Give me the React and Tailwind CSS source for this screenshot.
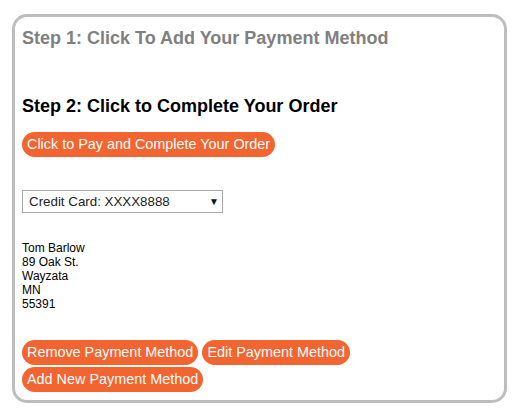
import React from 'react';

const OrangeButton = ({ children }) => (
  <button className="h-[25px] px-[5px] rounded-full bg-[#f26430] text-white text-[14.4px] leading-[25px] whitespace-nowrap">
    {children}
  </button>
);

const App = () => {
  const address = ['Tom Barlow', '89 Oak St.', 'Wayzata', 'MN', '55391'];

  return (
    <div className="min-h-screen bg-white pt-[14px] pl-[12px] font-['Liberation_Sans',Arial,sans-serif]">
      <div className="w-[495px] border-[3px] border-[#bdbdbd] rounded-[15px] px-[7px] pt-[11px] pb-[8px]">
        {/* step 1 */}
        <h3 className="text-[18px] leading-[20px] font-bold text-[#808080]">
          Step 1: Click To Add Your Payment Method
        </h3>

        {/* step 2 */}
        <h3 className="mt-[48px] text-[18px] leading-[20px] font-bold text-black">
          Step 2: Click to Complete Your Order
        </h3>
        <div className="mt-[16px] flex">
          <OrangeButton>Click to Pay and Complete Your Order</OrangeButton>
        </div>

        {/* payment method select */}
        <div className="mt-[33px] w-[201px] h-[23px] border border-[#a9a9a9] flex items-center justify-between pl-[6px] pr-[3px] text-[13.333px] text-[#222]">
          <span>Credit Card: XXXX8888</span>
          <span className="text-[10px] text-[#111]">▼</span>
        </div>

        {/* address */}
        <div className="mt-[28px] text-[12px] leading-[14px] text-black">
          {address.map((line) => (
            <div key={line}>{line}</div>
          ))}
        </div>

        {/* actions */}
        <div className="mt-[29px] flex flex-wrap gap-x-[4px] gap-y-[2px]">
          <OrangeButton>Remove Payment Method</OrangeButton>
          <OrangeButton>Edit Payment Method</OrangeButton>
          <OrangeButton>Add New Payment Method</OrangeButton>
        </div>
      </div>
    </div>
  );
};

export default App;
